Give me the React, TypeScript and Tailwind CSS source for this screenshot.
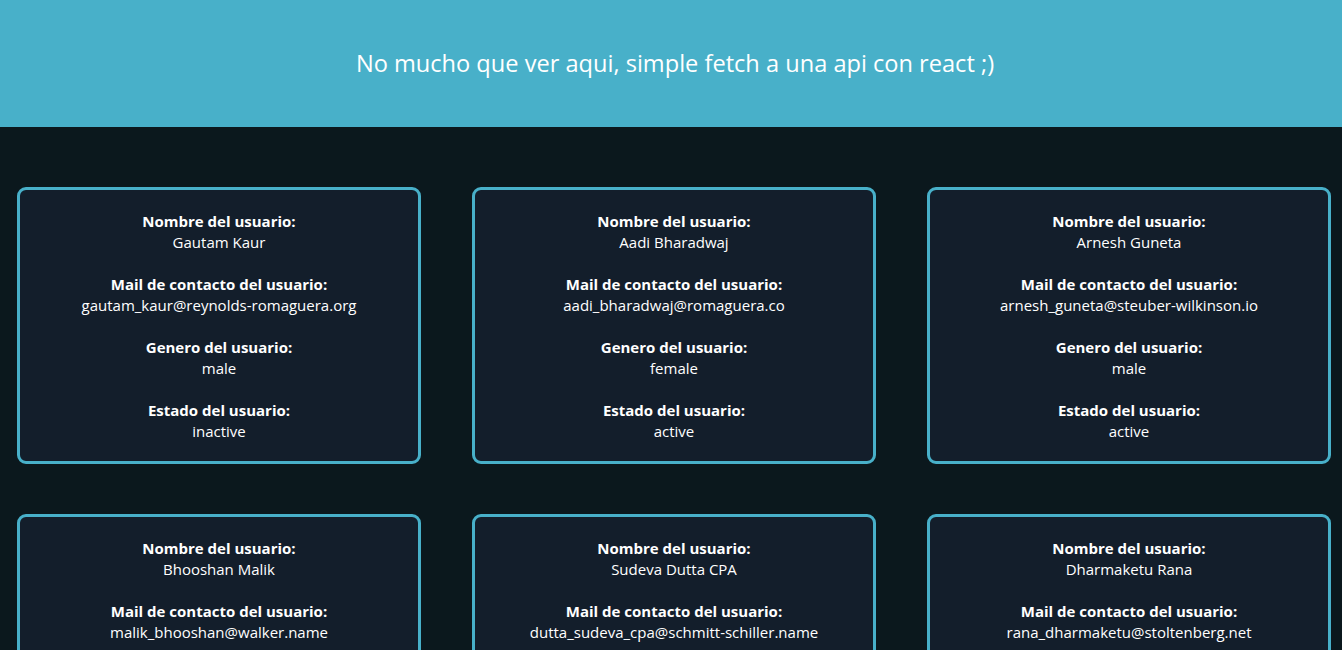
import React from 'react';

interface User {
  name: string;
  email: string;
  gender: string;
  status: string;
}

const users: User[] = [
  { name: 'Gautam Kaur', email: 'gautam_kaur@reynolds-romaguera.org', gender: 'male', status: 'inactive' },
  { name: 'Aadi Bharadwaj', email: 'aadi_bharadwaj@romaguera.co', gender: 'female', status: 'active' },
  { name: 'Arnesh Guneta', email: 'arnesh_guneta@steuber-wilkinson.io', gender: 'male', status: 'active' },
  { name: 'Bhooshan Malik', email: 'malik_bhooshan@walker.name', gender: 'male', status: 'active' },
  { name: 'Sudeva Dutta CPA', email: 'dutta_sudeva_cpa@schmitt-schiller.name', gender: 'female', status: 'inactive' },
  { name: 'Dharmaketu Rana', email: 'rana_dharmaketu@stoltenberg.net', gender: 'male', status: 'active' },
];

const Field = ({ label, value }: { label: string; value: string }) => (
  <div className="mb-[21px] last:mb-0">
    <p className="font-bold">{label}</p>
    <p>{value}</p>
  </div>
);

const UserCard = ({ user }: { user: User }) => (
  <div className="bg-[#131e2b] border-[3px] border-[#48b0c9] rounded-[9px] pt-[21px] pb-[19px] text-center">
    <Field label="Nombre del usuario:" value={user.name} />
    <Field label="Mail de contacto del usuario:" value={user.email} />
    <Field label="Genero del usuario:" value={user.gender} />
    <Field label="Estado del usuario:" value={user.status} />
  </div>
);

export default function App() {
  return (
    <div className="min-h-screen bg-[#0b181d] text-white font-['Open_Sans',sans-serif]">
      <header className="h-[127px] bg-[#48b0c9] flex items-center justify-center pl-[8px]">
        <h1 className="text-[23.6px] font-normal">No mucho que ver aqui, simple fetch a una api con react ;)</h1>
      </header>
      <main className="pt-[60px] pl-[17px] pr-[10px] grid grid-cols-[404px_404px_404px] gap-x-[51px] gap-y-[50px] text-[15px] leading-[21px]">
        {users.map((u) => (
          <UserCard key={u.email} user={u} />
        ))}
      </main>
    </div>
  );
}
